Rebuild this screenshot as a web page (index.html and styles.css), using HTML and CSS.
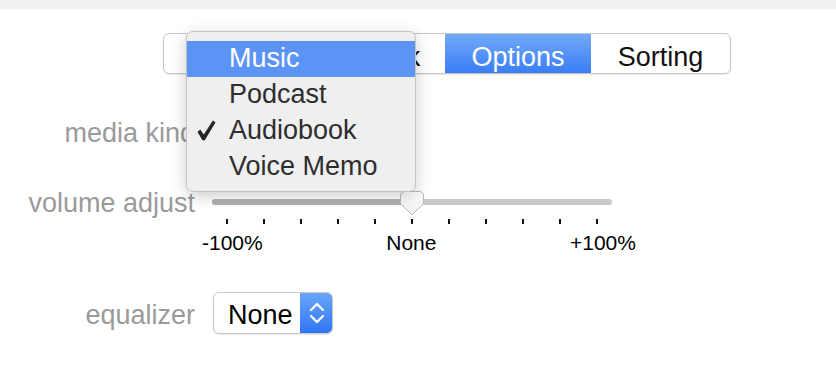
FILE: index.html
```html
<!DOCTYPE html>
<html>
<head>
<meta charset="utf-8">
<link rel="stylesheet" href="styles.css">
</head>
<body>
<div class="topbar"></div>
<div class="tabs">
  <div class="seg seg-details">Details</div>
  <div class="seg seg-artwork">Artwork</div>
  <div class="seg seg-options active">Options</div>
  <div class="seg seg-sorting">Sorting</div>
</div>

<div class="form">
  <div class="row row-kind">
    <div class="label">media kind</div>
    <div class="control"></div>
  </div>

  <div class="row row-volume">
    <div class="label">volume adjust</div>
    <div class="slider">
      <div class="track"><div class="track-fill"></div></div>
      <svg class="knob" width="24" height="25" viewBox="0 0 24 25">
        <defs>
          <linearGradient id="kg" x1="0" y1="0" x2="0" y2="1">
            <stop offset="0" stop-color="#ffffff"/>
            <stop offset="1" stop-color="#efefef"/>
          </linearGradient>
        </defs>
        <path d="M5 0.5 H19 Q23.5 0.5 23.5 5 V12.5 L12 24 L0.5 12.5 V5 Q0.5 0.5 5 0.5 Z" fill="url(#kg)" stroke="#b8b8b8" stroke-width="1"/>
      </svg>
      <div class="ticks">
        <span></span><span></span><span></span><span></span><span></span><span></span><span></span><span></span><span></span><span></span><span></span>
      </div>
      <div class="tick-labels">
        <span>-100%</span><span class="mid">None</span><span>+100%</span>
      </div>
    </div>
  </div>

  <div class="row row-eq">
    <div class="label">equalizer</div>
    <div class="popup">
      <div class="popup-value">None</div>
      <div class="popup-arrows">
        <svg width="16" height="24" viewBox="0 0 16 24">
          <path d="M2 9 L8 3 L14 9" fill="none" stroke="#fff" stroke-width="2.4" stroke-linecap="round" stroke-linejoin="round"/>
          <path d="M2 15 L8 21 L14 15" fill="none" stroke="#fff" stroke-width="2.4" stroke-linecap="round" stroke-linejoin="round"/>
        </svg>
      </div>
    </div>
  </div>
</div>

<div class="menu">
  <div class="item selected">Music</div>
  <div class="item">Podcast</div>
  <div class="item checked">
    <svg class="check" width="19" height="21" viewBox="0 0 19 21">
      <path d="M0.5 12 L3.2 9.6 L6.8 14.4 L15.8 0.5 L18.6 2.3 L7.8 20.3 L5.4 20.3 Z" fill="#262626"/>
    </svg>Audiobook</div>
  <div class="item">Voice Memo</div>
</div>
</body>
</html>
```

FILE: styles.css
```css
html, body {
  margin: 0;
  padding: 0;
  background: #ffffff;
}

body {
  width: 836px;
  height: 388px;
  overflow: hidden;
  position: relative;
  font-family: "Liberation Sans", Arial, sans-serif;
  font-size: 27px;
  color: #000;
}

.topbar {
  height: 9px;
  background: #f0f0f0;
}

/* segmented control */
.tabs {
  margin: 24px 0 0 163px;
  width: 566px;
  height: 39px;
  display: grid;
  grid-template-columns: 140px 141px 146px 139px;
  border: 1px solid #c8c8c8;
  border-radius: 6px;
  background: #fff;
  box-shadow: 0 1px 1px rgba(0, 0, 0, 0.08);
  overflow: hidden;
}

.seg {
  display: flex;
  justify-content: center;
  align-items: center;
  line-height: 39px;
  padding-top: 4px;
  box-sizing: border-box;
  color: #111;
}

.seg-details {
  border-right: 1px solid #c8c8c8;
}

.seg.active {
  background: linear-gradient(#72a9f8, #3479f6);
  color: #fff;
}

/* form */
.form {
  display: flex;
  flex-direction: column;
}

.row {
  display: grid;
  grid-template-columns: 195px auto;
  column-gap: 17px;
  align-items: start;
}

.label {
  text-align: right;
  color: #9a9a9a;
  line-height: 36px;
  padding-top: 3px;
}

.row-kind {
  margin-top: 38px;
  height: 36px;
}

.row-volume {
  margin-top: 34px;
}

.row-eq {
  margin-top: 37px;
}

.row-eq .label {
  line-height: 42px;
  padding-top: 2px;
}

/* slider */
.slider {
  position: relative;
  width: 400px;
}

.track {
  margin-top: 17px;
  height: 6px;
  border-radius: 3px;
  background: #c9c9c9;
  overflow: hidden;
}

.track-fill {
  width: 200px;
  height: 100%;
  background: #b1b1b1;
}

.knob {
  position: absolute;
  left: 188px;
  top: 9px;
}

.ticks {
  margin-top: 14px;
  padding: 0 14px;
  height: 5px;
  display: flex;
  justify-content: space-between;
}

.ticks span {
  width: 2px;
  height: 5px;
  background: #111;
}

.tick-labels {
  margin: 7px -24px 0 -10px;
  display: flex;
  justify-content: space-between;
  font-size: 21px;
  line-height: 24px;
  color: #000;
}

.tick-labels .mid {
  margin-right: 10px;
}

/* popup button */
.popup {
  margin-left: 1px;
  display: flex;
  height: 42px;
  width: 120px;
  box-sizing: border-box;
  border: 1px solid #c8c8c8;
  border-radius: 6px;
  overflow: hidden;
  background: #fff;
  box-shadow: 0 1px 1px rgba(0, 0, 0, 0.08);
}

.popup-value {
  flex: 1;
  padding: 2px 0 0 14px;
  line-height: 40px;
  color: #000;
}

.popup-arrows {
  width: 33px;
  display: flex;
  align-items: center;
  justify-content: center;
  background: linear-gradient(#6aa6f9, #2f75f6);
  margin: -1px -1px -1px 0;
}

/* dropdown menu */
.menu {
  position: absolute;
  left: 186px;
  top: 31px;
  width: 230px;
  height: 161px;
  box-sizing: border-box;
  padding-top: 9px;
  background: #efefef;
  border: 1px solid #c2c2c2;
  border-radius: 7px;
  box-shadow: 0 4px 16px rgba(0, 0, 0, 0.2);
  overflow: hidden;
}

.item {
  position: relative;
  height: 36px;
  line-height: 34px;
  padding-left: 42px;
  color: #2e2e2e;
}

.item.selected {
  background: #5b94f6;
  color: #fff;
}

.check {
  position: absolute;
  left: 10px;
  top: 7px;
}
```
